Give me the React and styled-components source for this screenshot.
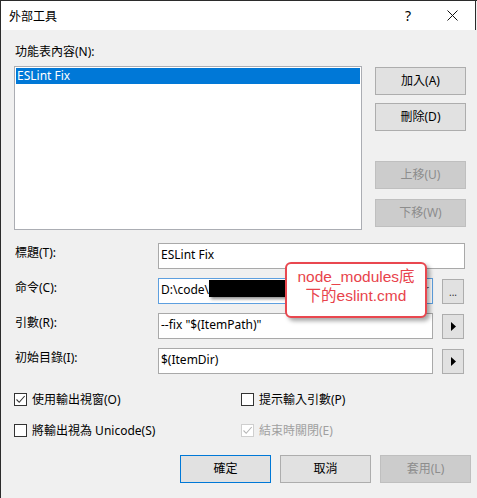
import React from "react";
import styled, { createGlobalStyle } from "styled-components";

const GlobalStyle = createGlobalStyle`
  html, body {
    margin: 0;
    padding: 0;
    background: #f0f0f0;
  }
  * {
    box-sizing: border-box;
  }
`;

const UI_FONT = `"Noto Sans", "Noto Sans CJK TC", sans-serif`;

const Window = styled.div`
  position: relative;
  width: 477px;
  height: 498px;
  border-left: 1px solid #2b2b2b;
  border-top: 1px solid #2b2b2b;
  background: #f0f0f0;
  font-family: ${UI_FONT};
  font-size: 12px;
  color: #000;
  overflow: hidden;
`;

const TitleBar = styled.div`
  display: flex;
  align-items: center;
  height: 29px;
  padding: 0 17px 0 8px;
  background: #fff;
  border-right: 1px solid #2b2b2b;
  margin-right: 1px;
`;

const Title = styled.span`
  font-family: "Noto Sans CJK TC", sans-serif;
  font-size: 12px;
  line-height: 16px;
`;

const HelpGlyph = styled.span`
  margin-left: auto;
  margin-right: 36px;
  font-size: 14px;
  line-height: 16px;
`;

const Body = styled.div`
  padding: 14px 12px 0 13px;
`;

const Label = styled.div`
  line-height: 16px;
  padding-left: 1px;
  padding-top: ${(p) => p.$top || 0}px;
  color: ${(p) => (p.$disabled ? "#a0a0a0" : "#000")};
  white-space: nowrap;
`;

const ListRow = styled.div`
  display: grid;
  grid-template-columns: 348px 1fr;
  column-gap: 13px;
  margin-top: 6px;
`;

const ListBox = styled.div`
  height: 164px;
  background: #fff;
  border: 1px solid #abadb3;
  padding: 1px;
`;

const ListItem = styled.div`
  height: 16px;
  line-height: 16px;
  padding-left: 1px;
  background: ${(p) => (p.$selected ? "#0078d7" : "transparent")};
  color: ${(p) => (p.$selected ? "#fff" : "#000")};
`;

const ButtonColumn = styled.div`
  display: flex;
  flex-direction: column;
  padding-top: 1px;
`;

const Button = styled.button`
  width: 91px;
  height: 28px;
  margin-top: ${(p) => p.$gap || 0}px;
  padding: 0;
  font-family: ${UI_FONT};
  font-size: 12px;
  line-height: 16px;
  background: ${(p) => (p.disabled ? "#cccccc" : "#e1e1e1")};
  color: ${(p) => (p.disabled ? "#8d8d8d" : "#000")};
  border: 1px solid
    ${(p) => (p.$default ? "#0078d7" : p.disabled ? "#bfbfbf" : "#adadad")};
  border-radius: 0;
`;

const Form = styled.div`
  display: grid;
  grid-template-columns: 144px 1fr;
  grid-auto-rows: 26px;
  row-gap: 9px;
  margin-top: 13px;
`;

const FieldRow = styled.div`
  display: flex;
  align-items: flex-start;
`;

const TextBox = styled.div`
  position: relative;
  display: flex;
  align-items: flex-start;
  flex: ${(p) => (p.$wide ? "1" : "0 0 275px")};
  height: 26px;
  padding: 3px 3px 0 2px;
  background: #fff;
  border: 1px solid ${(p) => (p.$focused ? "#5d9fdf" : "#a9a9a9")};
  line-height: 16px;
  white-space: nowrap;
  overflow: hidden;
`;

const Redacted = styled.span`
  display: inline-block;
  width: 84px;
  height: 17px;
  margin-top: -2px;
  background: #000;
  box-shadow: 2px 2px 3px rgba(0, 0, 0, 0.45);
`;

const Tail = styled.span`
  margin-left: auto;
  color: #555;
`;

const SideButton = styled.button`
  display: flex;
  align-items: center;
  justify-content: center;
  width: 22px;
  height: 25px;
  margin: 1px 0 0 9px;
  padding: 0;
  background: #e1e1e1;
  border: 1px solid #adadad;
  font-family: ${UI_FONT};
  font-size: 10px;
  line-height: 10px;
  color: #333;
`;

const Checks = styled.div`
  display: grid;
  grid-template-columns: 227px 1fr;
  row-gap: 15px;
  margin-top: 17px;
`;

const CheckItem = styled.label`
  display: flex;
  align-items: center;
  gap: 5px;
  height: 16px;
  color: ${(p) => (p.$disabled ? "#a0a0a0" : "#000")};
`;

const Box = styled.span`
  display: flex;
  align-items: center;
  justify-content: center;
  width: 13px;
  height: 13px;
  background: #fff;
  border: 1px solid ${(p) => (p.$disabled ? "#cfcfcf" : "#333")};
`;

const Footer = styled.div`
  display: flex;
  justify-content: flex-end;
  gap: 9px;
  margin: 17px -6px 0 0;
`;

const Callout = styled.div`
  position: absolute;
  left: 284px;
  top: 261px;
  width: 142px;
  height: 56px;
  padding-top: 3px;
  border: 2px solid #e9474f;
  border-radius: 6px;
  background: #fff;
  box-shadow: 3px 3px 4px rgba(0, 0, 0, 0.35);
  color: #e8434b;
  font-family: "Liberation Sans", "Noto Sans CJK TC", sans-serif;
  font-size: 15.5px;
  line-height: 19px;
  text-align: center;
`;

const CloseIcon = () => (
  <svg width="11" height="11" viewBox="0 0 11 11">
    <path d="M0.5 0.5 L10.5 10.5 M10.5 0.5 L0.5 10.5" stroke="#111" strokeWidth="1" />
  </svg>
);

const PlayIcon = () => (
  <svg width="5" height="9" viewBox="0 0 5 9">
    <path d="M0 0 L5 4.5 L0 9 Z" fill="#000" />
  </svg>
);

const Check = ({ checked, disabled, children }) => (
  <CheckItem $disabled={disabled}>
    <Box $disabled={disabled}>
      {checked && (
        <svg width="11" height="11" viewBox="0 0 11 11">
          <path
            d="M1.5 5.5 L4.2 8.3 L9.7 2"
            fill="none"
            stroke={disabled ? "#b5b5b5" : "#333"}
            strokeWidth="1.1"
          />
        </svg>
      )}
    </Box>
    {children}
  </CheckItem>
);

export default function App() {
  return (
    <Window>
      <GlobalStyle />
      <TitleBar>
        <Title>外部工具</Title>
        <HelpGlyph>?</HelpGlyph>
        <CloseIcon />
      </TitleBar>

      <Body>
        <Label>功能表內容(N):</Label>
        <ListRow>
          <ListBox>
            <ListItem $selected>ESLint Fix</ListItem>
          </ListBox>
          <ButtonColumn>
            <Button>加入(A)</Button>
            <Button $gap={8}>刪除(D)</Button>
            <Button $gap={30} disabled>
              上移(U)
            </Button>
            <Button $gap={10} disabled>
              下移(W)
            </Button>
          </ButtonColumn>
        </ListRow>

        <Form>
          <Label $top={2}>標題(T):</Label>
          <FieldRow>
            <TextBox $wide>ESLint Fix</TextBox>
          </FieldRow>

          <Label $top={2}>命令(C):</Label>
          <FieldRow>
            <TextBox $focused>
              D:\code\
              <Redacted />
              <Tail>r</Tail>
            </TextBox>
            <SideButton>...</SideButton>
          </FieldRow>

          <Label $top={2}>引數(R):</Label>
          <FieldRow>
            <TextBox>--fix "$(ItemPath)"</TextBox>
            <SideButton>
              <PlayIcon />
            </SideButton>
          </FieldRow>

          <Label $top={2}>初始目錄(I):</Label>
          <FieldRow>
            <TextBox>$(ItemDir)</TextBox>
            <SideButton>
              <PlayIcon />
            </SideButton>
          </FieldRow>
        </Form>

        <Checks>
          <Check checked>使用輸出視窗(O)</Check>
          <Check>提示輸入引數(P)</Check>
          <Check>將輸出視為 Unicode(S)</Check>
          <Check checked disabled>
            結束時關閉(E)
          </Check>
        </Checks>

        <Footer>
          <Button $default>確定</Button>
          <Button>取消</Button>
          <Button disabled>套用(L)</Button>
        </Footer>
      </Body>

      <Callout>
        node_modules底
        <br />
        下的eslint.cmd
      </Callout>
    </Window>
  );
}
